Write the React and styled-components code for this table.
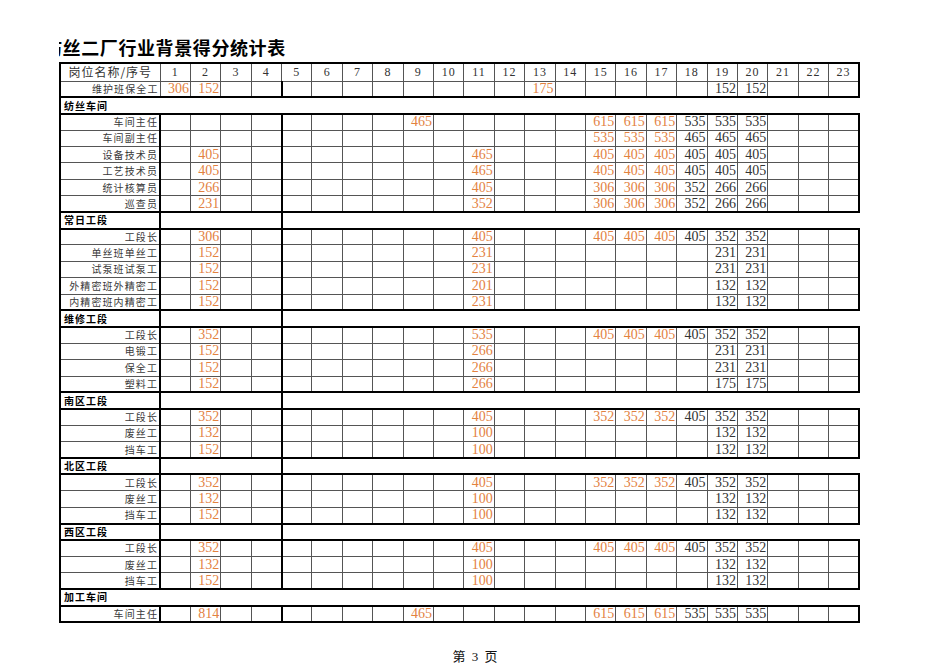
import React from "react";
import styled, { createGlobalStyle } from "styled-components";

const THICK = "2px solid #000";
const THIN = "1px solid #555";
const ORANGE = "#e3823f";
const CJK = `"Noto Sans CJK SC", "Noto Sans", sans-serif`;
const SERIF = `"Liberation Serif", "Noto Sans CJK SC", serif`;

const GlobalStyle = createGlobalStyle`
  html, body { margin: 0; padding: 0; background: #fff; }
  body { font-family: ${CJK}; }
`;

const Page = styled.div`
  width: 950px;
  height: 672px;
  box-sizing: border-box;
  padding-top: 36px;
  display: flex;
  flex-direction: column;
  overflow: hidden;
`;

const TitleClip = styled.div`
  margin-left: 59px;
  width: 320px;
  height: 22px;
  overflow: hidden;
`;

const Title = styled.h1`
  margin: 0 0 0 -15px;
  font-family: ${CJK};
  font-size: 18px;
  font-weight: 700;
  letter-spacing: 0.6px;
  line-height: 22px;
  color: #000;
  white-space: nowrap;
`;

const Sheet = styled.table`
  margin: 4px 0 0 59px;
  width: 801px;
  table-layout: fixed;
  border-collapse: collapse;
  border-spacing: 0;
`;

const Row = styled.tr`
  height: ${(p) => p.$h}px;
`;

const Cell = styled.td`
  padding: 0;
  box-sizing: border-box;
  white-space: nowrap;
  overflow: hidden;
  line-height: 1;
  border-top: ${(p) => p.$t || "none"};
  border-right: ${(p) => p.$r || "none"};
  border-bottom: ${(p) => p.$b || "none"};
  border-left: ${(p) => p.$l || "none"};
`;

const HeadLabel = styled(Cell)`
  text-align: center;
  font-family: ${CJK};
  font-size: 12px;
  letter-spacing: 1px;
  color: #333;
`;

const HeadNum = styled(Cell)`
  text-align: center;
  font-family: ${SERIF};
  font-size: 12px;
  letter-spacing: 1px;
  color: #333;
`;

const Label = styled(Cell)`
  text-align: right;
  padding-right: 1px;
  font-family: ${CJK};
  font-size: 10px;
  letter-spacing: 1.1px;
  color: #3a3a3a;
`;

const Num = styled(Cell)`
  text-align: right;
  padding-right: 1px;
  font-family: ${SERIF};
  font-size: 14px;
  color: ${(p) => (p.$orange ? ORANGE : "#333")};
`;

const SectionCell = styled(Cell)`
  text-align: left;
  padding-left: 3px;
  font-family: ${CJK};
  font-size: 10px;
  font-weight: 700;
  letter-spacing: 1px;
  color: #000;
`;

const Footer = styled.div`
  margin-top: 23px;
  text-align: center;
  font-family: ${SERIF};
  font-size: 13px;
  color: #111;
  word-spacing: 3px;
`;

const COLS = Array.from({ length: 23 }, (_, i) => i + 1);
const ROW_H = 16.4;

const r = (label, cells) => ({ label, cells });
const trio = (a, b, c, d) => ({ 15: a, 16: a, 17: a, 18: b, 19: c, 20: d });

const firstRow = r("维护班保全工", { 1: 306, 2: 152, 13: 175, 19: 152, 20: 152 });

const sections = [
  {
    name: "纺丝车间",
    full: true,
    rows: [
      r("车间主任", { 9: 465, ...trio(615, 535, 535, 535) }),
      r("车间副主任", trio(535, 465, 465, 465)),
      r("设备技术员", { 2: 405, 11: 465, ...trio(405, 405, 405, 405) }),
      r("工艺技术员", { 2: 405, 11: 465, ...trio(405, 405, 405, 405) }),
      r("统计核算员", { 2: 266, 11: 405, ...trio(306, 352, 266, 266) }),
      r("巡查员", { 2: 231, 11: 352, ...trio(306, 352, 266, 266) }),
    ],
  },
  {
    name: "常日工段",
    rows: [
      r("工段长", { 2: 306, 11: 405, ...trio(405, 405, 352, 352) }),
      r("单丝班单丝工", { 2: 152, 11: 231, 19: 231, 20: 231 }),
      r("试泵班试泵工", { 2: 152, 11: 231, 19: 231, 20: 231 }),
      r("外精密班外精密工", { 2: 152, 11: 201, 19: 132, 20: 132 }),
      r("内精密班内精密工", { 2: 152, 11: 231, 19: 132, 20: 132 }),
    ],
  },
  {
    name: "维修工段",
    rows: [
      r("工段长", { 2: 352, 11: 535, ...trio(405, 405, 352, 352) }),
      r("电锻工", { 2: 152, 11: 266, 19: 231, 20: 231 }),
      r("保全工", { 2: 152, 11: 266, 19: 231, 20: 231 }),
      r("塑料工", { 2: 152, 11: 266, 19: 175, 20: 175 }),
    ],
  },
  {
    name: "南区工段",
    rows: [
      r("工段长", { 2: 352, 11: 405, ...trio(352, 405, 352, 352) }),
      r("废丝工", { 2: 132, 11: 100, 19: 132, 20: 132 }),
      r("挡车工", { 2: 152, 11: 100, 19: 132, 20: 132 }),
    ],
  },
  {
    name: "北区工段",
    rows: [
      r("工段长", { 2: 352, 11: 405, ...trio(352, 405, 352, 352) }),
      r("废丝工", { 2: 132, 11: 100, 19: 132, 20: 132 }),
      r("挡车工", { 2: 152, 11: 100, 19: 132, 20: 132 }),
    ],
  },
  {
    name: "西区工段",
    rows: [
      r("工段长", { 2: 352, 11: 405, ...trio(405, 405, 352, 352) }),
      r("废丝工", { 2: 132, 11: 100, 19: 132, 20: 132 }),
      r("挡车工", { 2: 152, 11: 100, 19: 132, 20: 132 }),
    ],
  },
  {
    name: "加工车间",
    full: true,
    rows: [r("车间主任", { 2: 814, 9: 465, ...trio(615, 535, 535, 535) })],
  },
];

const isOrange = (c) => c < 18 || c > 20;
const colRight = (c) => (c === 23 ? THICK : THIN);

function HeaderRow() {
  return (
    <Row $h={18}>
      <HeadLabel $t={THICK} $l={THICK} $r={THIN} $b={THIN}>
        岗位名称/序号
      </HeadLabel>
      {COLS.map((c) => (
        <HeadNum key={c} $t={THICK} $r={colRight(c)} $b={THIN}>
          {c}
        </HeadNum>
      ))}
    </Row>
  );
}

function DataRow({ row, bottom, labelRight, splitRight }) {
  return (
    <Row $h={ROW_H}>
      <Label $l={THICK} $r={labelRight} $b={bottom}>
        {row.label}
      </Label>
      {COLS.map((c) => (
        <Num
          key={c}
          $r={c === 4 ? splitRight : colRight(c)}
          $b={bottom}
          $orange={isOrange(c)}
        >
          {row.cells[c] ?? ""}
        </Num>
      ))}
    </Row>
  );
}

function SectionRow({ name, full }) {
  if (full) {
    return (
      <Row $h={ROW_H}>
        <SectionCell colSpan={24} $l={THICK} $b={THICK}>
          {name}
        </SectionCell>
      </Row>
    );
  }
  return (
    <Row $h={ROW_H}>
      <SectionCell $l={THICK} $r={THICK} $b={THICK}>
        {name}
      </SectionCell>
      <Cell colSpan={4} $r={THICK} $b={THICK} />
      <Cell colSpan={19} $b={THICK} />
    </Row>
  );
}

export default function App() {
  return (
    <>
      <GlobalStyle />
      <Page>
        <TitleClip>
          <Title>纺丝二厂行业背景得分统计表</Title>
        </TitleClip>
        <Sheet>
          <colgroup>
            <col style={{ width: "100px" }} />
            {COLS.map((c) => (
              <col key={c} />
            ))}
          </colgroup>
          <tbody>
            <HeaderRow />
            <DataRow row={firstRow} bottom={THICK} labelRight={THIN} splitRight={THICK} />
            {sections.map((s) => (
              <React.Fragment key={s.name}>
                <SectionRow name={s.name} full={s.full} />
                {s.rows.map((row, i) => (
                  <DataRow
                    key={i}
                    row={row}
                    bottom={i === s.rows.length - 1 ? THICK : THIN}
                    labelRight={THICK}
                    splitRight={THICK}
                  />
                ))}
              </React.Fragment>
            ))}
          </tbody>
        </Sheet>
        <Footer>第 3 页</Footer>
      </Page>
    </>
  );
}
